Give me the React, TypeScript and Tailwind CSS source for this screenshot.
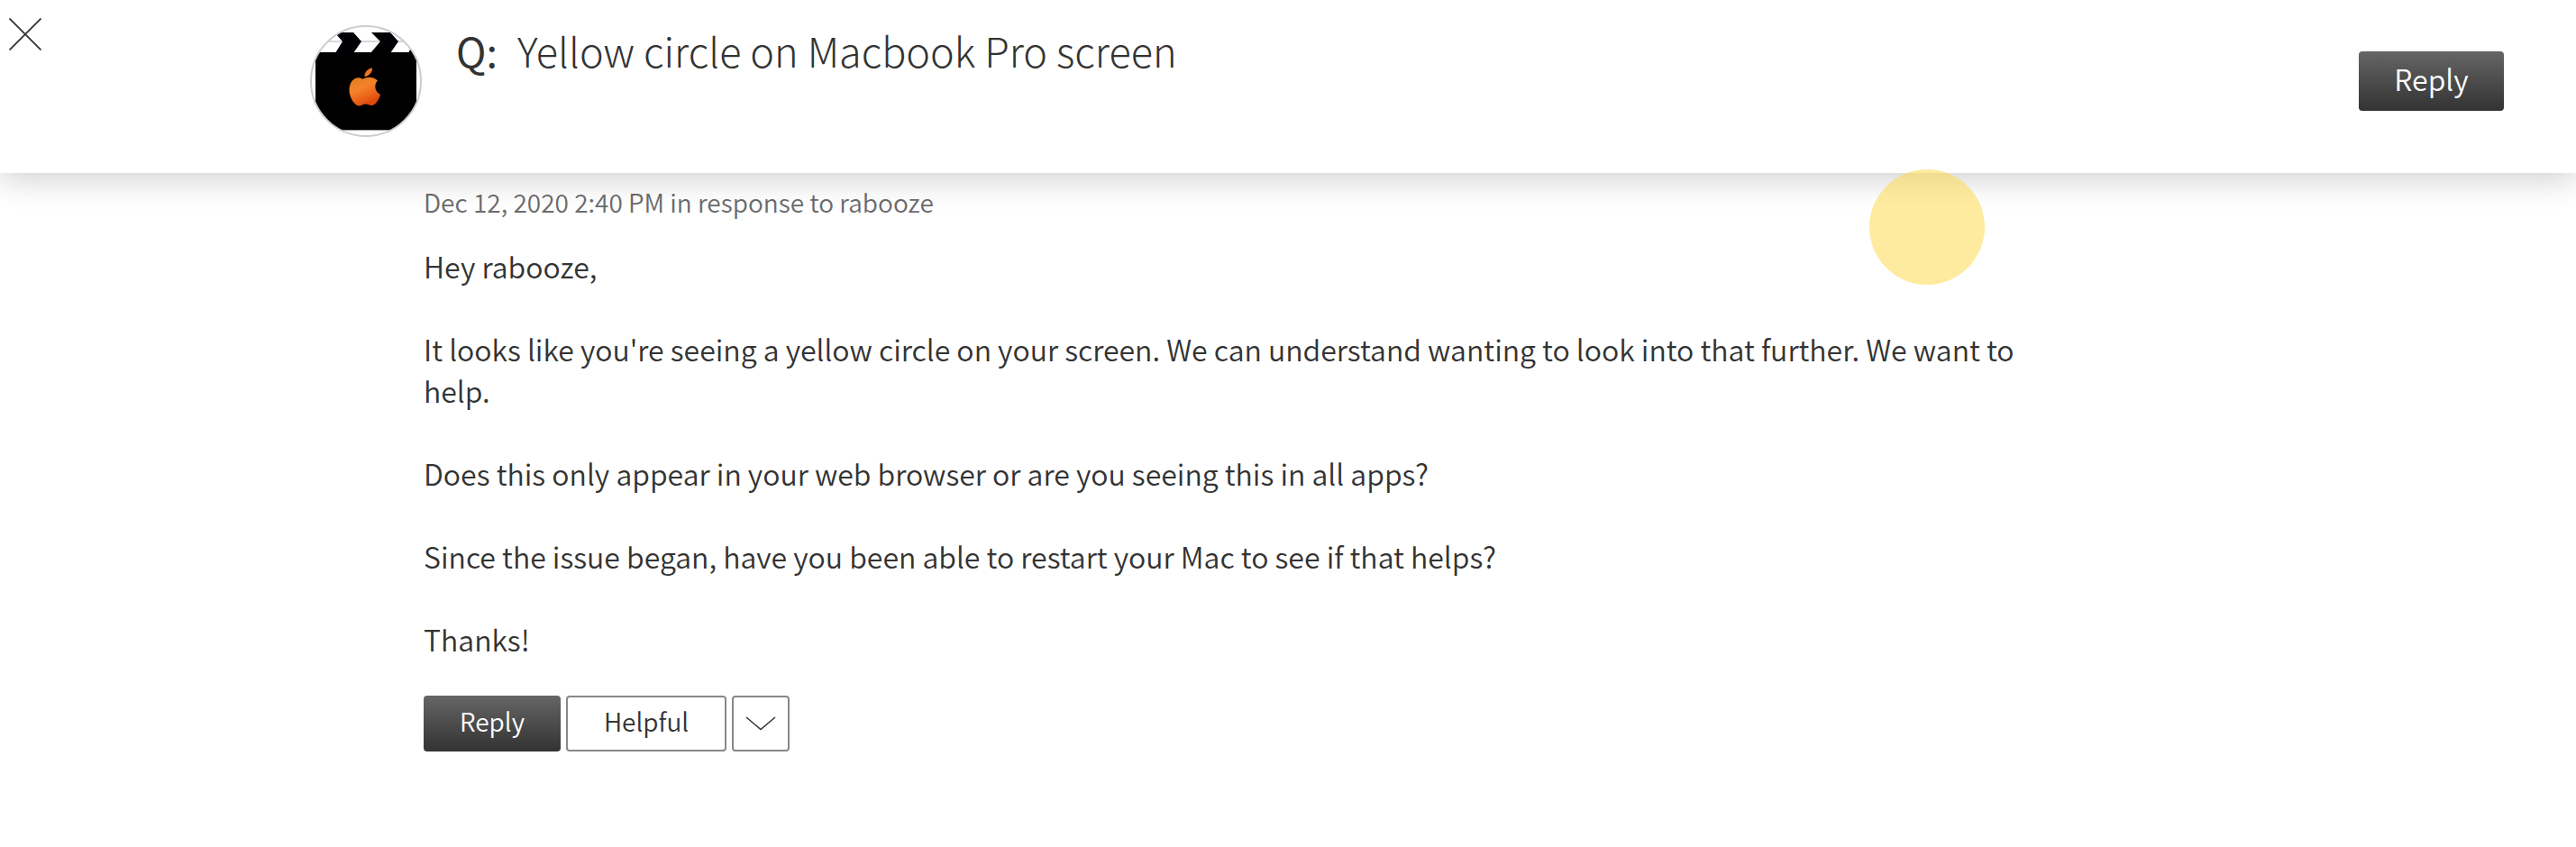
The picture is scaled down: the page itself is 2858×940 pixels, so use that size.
const darkButton =
  "flex items-center justify-center rounded-[4px] bg-linear-to-b from-[#666666] to-[#333333] pb-[6px] text-white";

function Avatar() {
  return (
    <svg viewBox="0 0 124 124" className="size-[124px] shrink-0" role="img" aria-label="rabooze">
      <defs>
        <clipPath id="avatar-clip">
          <circle cx="62" cy="62" r="61" />
        </clipPath>
        <linearGradient id="fruit" x1="0" y1="0" x2="0.5" y2="1">
          <stop offset="0" stopColor="#e07a1c" />
          <stop offset="0.45" stopColor="#f5832a" />
          <stop offset="1" stopColor="#e2480c" />
        </linearGradient>
      </defs>
      <circle cx="62" cy="62" r="61" fill="#ffffff" />
      <g clipPath="url(#avatar-clip)">
        <path d="M6 30H118V116H6Z" fill="#000000" />
        <path d="M6 116.500H118" stroke="#999999" />
        <path d="M10 18H115" stroke="#d8d8d8" strokeWidth="2" />
        <path d="M30 8H48L57 18L48 31H28L36 18L29 10Z" fill="#000005" />
        <path d="M68 8H89L98 18L89 31H67L78 18Z" fill="#000005" />
        <path d="M109 31L111 27L120 31Z" fill="#000005" />
        <path
          d="M59 59.500C63 57.500 69 56.500 75 61.500C71.500 64.500 70.500 73 78 77C76 83.500 72 89 68.500 89C65.500 89 64.500 87.500 61.500 87.500C58.500 87.500 57 89.500 54 89.500C49 89 43.500 79.500 43.500 72C43.500 62 50 57 55.500 58.500C57 59 58 59.800 59 59.500Z"
          fill="url(#fruit)"
        />
        <path d="M60.500 57C60 52.500 64 48 69 47.500C69.500 52 65.500 56.500 60.500 57Z" fill="#ee7420" />
      </g>
      <circle cx="62" cy="62" r="61" fill="none" stroke="#cccccc" strokeWidth="2" />
    </svg>
  );
}

export default function App() {
  return (
    <div className="min-h-screen bg-white font-['Noto_Sans_CJK_SC',sans-serif] font-[350] text-[#333333]">
      <header className="relative z-10 bg-white shadow-[0_8px_32px_rgba(0,0,0,0.18)]">
        <button type="button" aria-label="Close" className="absolute top-[20px] left-[10px] size-[36px]">
          <svg viewBox="0 0 36 36" className="size-full" fill="none" stroke="#333333" strokeWidth="1.800">
            <path d="M0.500 0.500L35.500 35.500M35.500 0.500L0.500 35.500" />
          </svg>
        </button>
        <div className="mx-auto flex h-[192px] max-w-[2170px] items-start pt-[28px]">
          <Avatar />
          <h1 className="flex gap-[22px] pl-[38px] text-[45px] leading-[56px] font-light">
            <span className="font-normal">Q:</span>
            <span>Yellow circle on Macbook Pro screen</span>
          </h1>
        </div>
        <button type="button" className={`${darkButton} absolute top-[57px] right-[80px] h-[66px] w-[161px] text-[32px]`}>
          Reply
        </button>
        <div
          aria-hidden="true"
          className="absolute top-[188px] left-[2074px] size-[128px] rounded-full bg-[#ffdb52]/55"
        />
      </header>
      <main className="mx-auto max-w-[2170px] pt-[14px] pl-[126px]">
        <p className="text-[28px] leading-[36px] text-[#6c6c6c]">Dec 12, 2020 2:40 PM in response to rabooze</p>
        <div className="mt-[30px] flex max-w-[1790px] flex-col gap-[46px] text-[32px] leading-[46px]">
          <p>Hey rabooze,</p>
          <p>
            It looks like you're seeing a yellow circle on your screen. We can understand wanting to look into that
            further. We want to help.
          </p>
          <p>Does this only appear in your web browser or are you seeing this in all apps?</p>
          <p>Since the issue began, have you been able to restart your Mac to see if that helps?</p>
          <p>Thanks!</p>
        </div>
        <div className="mt-[40px] flex gap-[6px] text-[28px]">
          <button type="button" className={`${darkButton} h-[62px] w-[152px]`}>
            Reply
          </button>
          <button type="button" className="h-[62px] w-[178px] rounded-[4px] border-2 border-[#888888] pb-[6px]">
            Helpful
          </button>
          <button
            type="button"
            aria-label="More options"
            className="flex h-[62px] w-[64px] items-center justify-center rounded-[4px] border-2 border-[#888888]"
          >
            <svg viewBox="0 0 34 16" className="h-[16px] w-[34px]" fill="none" stroke="#333333" strokeWidth="1.500">
              <path d="M1 1L17 14.500L33 1" />
            </svg>
          </button>
        </div>
      </main>
    </div>
  );
}
